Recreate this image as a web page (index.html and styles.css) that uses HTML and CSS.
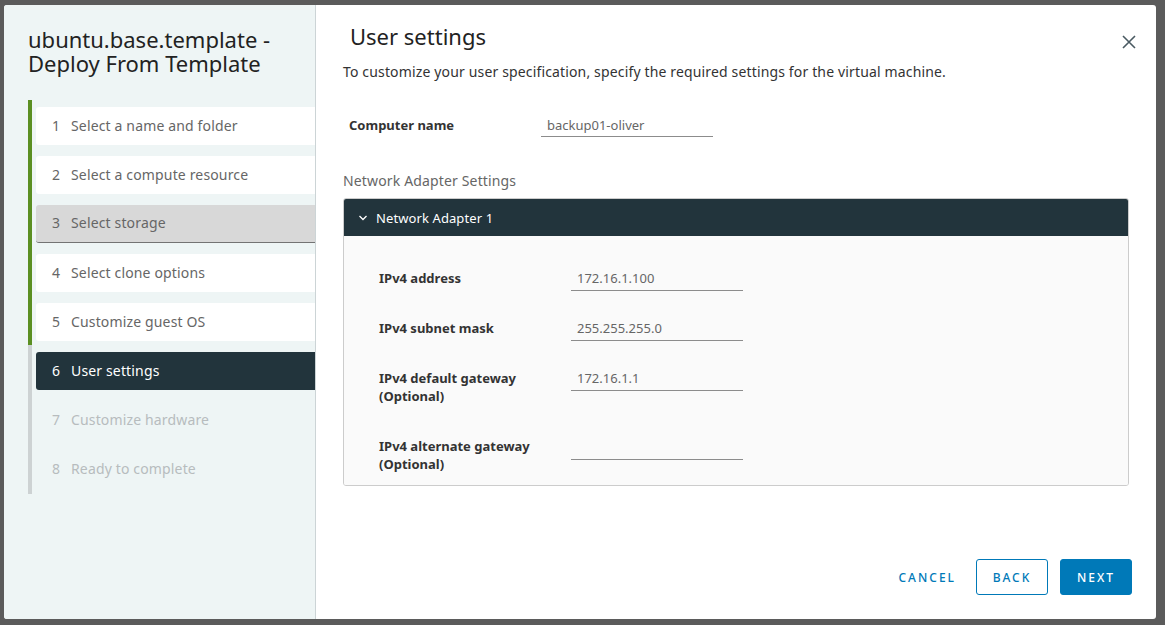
FILE: index.html
```html
<!DOCTYPE html>
<html lang="en">
<head>
<meta charset="utf-8">
<title>Deploy From Template</title>
<link rel="stylesheet" href="styles.css">
</head>
<body>
<div class="backdrop">
  <div class="modal">
    <aside class="side">
      <h1 class="side-title">ubuntu.base.template - Deploy From Template</h1>
      <ol class="steps">
        <li class="step done"><span class="num">1</span>Select a name and folder</li>
        <li class="step done"><span class="num">2</span>Select a compute resource</li>
        <li class="step done hover"><span class="num">3</span>Select storage</li>
        <li class="step done"><span class="num">4</span>Select clone options</li>
        <li class="step done"><span class="num">5</span>Customize guest OS</li>
        <li class="step active"><span class="num">6</span>User settings</li>
        <li class="step todo"><span class="num">7</span>Customize hardware</li>
        <li class="step todo"><span class="num">8</span>Ready to complete</li>
      </ol>
    </aside>
    <main class="content">
      <div class="head">
        <h2 class="title">User settings</h2>
        <button class="close" aria-label="Close">
          <svg width="16" height="16" viewBox="0 0 16 16"><path d="M2 2 L14 14 M14 2 L2 14" stroke="#4a5a62" stroke-width="1.6" fill="none"/></svg>
        </button>
      </div>
      <p class="desc">To customize your user specification, specify the required settings for the virtual machine.</p>
      <div class="row top-row">
        <label class="label">Computer name</label>
        <div class="input">backup01-oliver</div>
      </div>
      <div class="section-label">Network Adapter Settings</div>
      <div class="panel">
        <div class="panel-head">
          <svg width="10" height="10" viewBox="0 0 10 10"><path d="M1.5 3 L5 6.5 L8.5 3" stroke="#fff" stroke-width="1.3" fill="none"/></svg>
          <span>Network Adapter 1</span>
        </div>
        <div class="panel-body">
          <div class="frow">
            <div class="flabel">IPv4 address</div>
            <div class="finput">172.16.1.100</div>
          </div>
          <div class="frow">
            <div class="flabel">IPv4 subnet mask</div>
            <div class="finput">255.255.255.0</div>
          </div>
          <div class="frow">
            <div class="flabel">IPv4 default gateway<br>(Optional)</div>
            <div class="finput">172.16.1.1</div>
          </div>
          <div class="frow">
            <div class="flabel">IPv4 alternate gateway<br>(Optional)</div>
            <div class="finput"></div>
          </div>
        </div>
      </div>
      <div class="footer">
        <button class="btn link">CANCEL</button>
        <button class="btn outline">BACK</button>
        <button class="btn primary">NEXT</button>
      </div>
    </main>
  </div>
</div>
</body>
</html>
```
FILE: styles.css
```css
* { box-sizing: border-box; }
html, body { margin: 0; padding: 0; }
body {
  width: 1165px;
  height: 625px;
  overflow: hidden;
  background: #5b5b5b;
  font-family: "Noto Sans", "Open Sans", sans-serif;
  color: #333;
}
.backdrop {
  width: 1165px;
  height: 625px;
  padding: 5px 9px 6px 4px;
}
.modal {
  display: flex;
  width: 1152px;
  height: 614px;
  background: #fff;
  border-radius: 3px;
  overflow: hidden;
}
.side {
  width: 312px;
  flex: none;
  background: #eef5f5;
  border-right: 1px solid #ccd4d6;
  padding: 22px 0 0 24px;
}
.side-title {
  margin: 0;
  font-weight: 400;
  font-size: 22px;
  line-height: 24px;
  color: #222;
  width: 260px;
}
.steps {
  list-style: none;
  margin: 25px 0 0 0;
  padding: 7px 0 6px 4px;
  border-left: 4px solid #cdd2d3;
  position: relative;
}
.steps::before {
  content: "";
  position: absolute;
  left: -4px;
  top: 0;
  width: 4px;
  height: 245px;
  background: #5b8f22;
}
.step {
  height: 38px;
  margin-bottom: 11px;
  display: flex;
  align-items: center;
  padding: 0 0 2px 16px;
  font-size: 14px;
  letter-spacing: 0.15px;
  color: #666;
  border-radius: 3px 0 0 3px;
}
.step .num { width: 19px; flex: none; }
.step.done { background: #fff; }
.step.hover { background: #d8d8d8; border-bottom: 1px solid #737373; }
.step.active { background: #22343c; color: #fff; }
.step.todo { background: transparent; color: #b7bcbe; }
.step:last-child { margin-bottom: 0; }

.content {
  flex: 1;
  padding: 0 0 0 27px;
  display: flex;
  flex-direction: column;
}
.head {
  display: flex;
  justify-content: space-between;
  align-items: flex-start;
  padding-top: 19px;
  padding-right: 19px;
}
.title {
  margin: 0 0 0 7px;
  font-weight: 400;
  font-size: 22px;
  line-height: 24px;
  color: #222;
}
.close {
  border: 0;
  background: none;
  padding: 0;
  margin-top: 10px;
  width: 16px;
  height: 16px;
}
.desc {
  margin: 12px 0 0 0;
  font-size: 14px;
  line-height: 20px;
  letter-spacing: 0.15px;
  color: #333;
}
.row {
  display: flex;
  align-items: center;
}
.top-row { margin-top: 31px; padding-left: 6px; }
.label {
  width: 192px;
  font-size: 13px;
  font-weight: 700;
  color: #333;
}
.input {
  width: 172px;
  height: 24px;
  padding: 3px 6px 0;
  border-bottom: 1px solid #8c8c8c;
  font-size: 13px;
  color: #666;
}
.section-label {
  margin-top: 34px;
  font-size: 14px;
  letter-spacing: 0.15px;
  color: #666;
}
.panel {
  margin-top: 8px;
  width: 786px;
  border: 1px solid #ccc;
  border-radius: 3px;
  overflow: hidden;
}
.panel-head {
  height: 37px;
  background: #22343c;
  color: #fff;
  display: flex;
  align-items: center;
  gap: 8px;
  padding-left: 14px;
  font-size: 13px;
  letter-spacing: 0.1px;
}
.panel-body {
  background: #fafafa;
  padding: 33px 0 10px 35px;
  height: 249px;
}
.frow {
  display: flex;
  align-items: flex-start;
  height: 50px;
}
.frow:nth-child(3) { height: 68px; }
.flabel {
  width: 192px;
  font-size: 13px;
  line-height: 18px;
  font-weight: 700;
  color: #333;
}
.finput {
  width: 172px;
  height: 22px;
  padding: 0 6px;
  border-bottom: 1px solid #8c8c8c;
  font-size: 13px;
  line-height: 18px;
  color: #666;
}
.frow:nth-child(4) .finput { height: 23px; }

.footer {
  margin-top: auto;
  margin-bottom: 24px;
  display: flex;
  justify-content: flex-end;
  gap: 12px;
  padding-right: 24px;
}
.btn {
  height: 36px;
  padding: 0 16px;
  font-family: inherit;
  font-size: 12px;
  font-weight: 500;
  letter-spacing: 2px;
  border-radius: 3px;
  cursor: pointer;
}
.btn.link { background: none; border: 0; color: #0079b8; padding: 0 8px 0 16px; }
.btn.outline { background: #fff; border: 1px solid #0079b8; color: #0079b8; width: 72px; padding: 0; }
.btn.primary { background: #0079b8; border: 1px solid #0079b8; color: #fff; width: 72px; padding: 0; }
```
